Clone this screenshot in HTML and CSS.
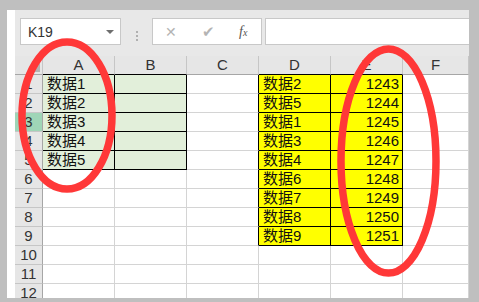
FILE: index.html
```html
<!DOCTYPE html>
<html lang="zh-CN">
<head>
    <meta charset="UTF-8">
    <title>K19</title>
    <link rel="stylesheet" href="styles.css">
</head>
<body>
    <div class="window">
        <div class="toolbar">
            <div class="name-box">
                <span>K19</span>
                <span class="drop"></span>
            </div>
            <div class="grip"><i></i><i></i><i></i></div>
            <div class="fx-box">
                <span class="btn">&#x2715;</span>
                <span class="btn check">&#x2714;</span>
                <span class="fx">f<sub>x</sub></span>
            </div>
            <div class="formula"></div>
        </div>

        <table class="sheet">
            <colgroup>
                <col class="c-head">
                <col class="c-col"><col class="c-col"><col class="c-col">
                <col class="c-col"><col class="c-col"><col class="c-last">
            </colgroup>
            <tr class="head">
                <td class="corner"><span class="tri"></span></td>
                <td class="bb">A</td><td class="bb">B</td><td>C</td>
                <td class="bb">D</td><td class="bb">E</td><td>F</td>
            </tr>
            <tr><td class="rh">1</td><td class="g">数据1</td><td class="g"></td><td class="br"></td><td class="y">数据2</td><td class="y num">1243</td><td></td></tr>
            <tr><td class="rh">2</td><td class="g">数据2</td><td class="g"></td><td class="br"></td><td class="y">数据5</td><td class="y num">1244</td><td></td></tr>
            <tr><td class="rh sel">3</td><td class="g">数据3</td><td class="g"></td><td class="br"></td><td class="y">数据1</td><td class="y num">1245</td><td></td></tr>
            <tr><td class="rh">4</td><td class="g">数据4</td><td class="g"></td><td class="br"></td><td class="y">数据3</td><td class="y num">1246</td><td></td></tr>
            <tr><td class="rh">5</td><td class="g">数据5</td><td class="g"></td><td class="br"></td><td class="y">数据4</td><td class="y num">1247</td><td></td></tr>
            <tr><td class="rh">6</td><td></td><td></td><td class="br"></td><td class="y">数据6</td><td class="y num">1248</td><td></td></tr>
            <tr><td class="rh">7</td><td></td><td></td><td class="br"></td><td class="y">数据7</td><td class="y num">1249</td><td></td></tr>
            <tr><td class="rh">8</td><td></td><td></td><td class="br"></td><td class="y">数据8</td><td class="y num">1250</td><td></td></tr>
            <tr><td class="rh">9</td><td></td><td></td><td class="br"></td><td class="y">数据9</td><td class="y num">1251</td><td></td></tr>
            <tr><td class="rh">10</td><td></td><td></td><td></td><td></td><td></td><td></td></tr>
            <tr><td class="rh">11</td><td></td><td></td><td></td><td></td><td></td><td></td></tr>
            <tr><td class="rh">12</td><td></td><td></td><td></td><td></td><td></td><td></td></tr>
        </table>
    </div>

    <svg class="marks" width="479" height="302" viewBox="0 0 479 302">
        <ellipse cx="67" cy="115.5" rx="45" ry="73.5" />
        <ellipse cx="388.5" cy="161" rx="47.5" ry="112" />
    </svg>
</body>
</html>
```

FILE: styles.css
```css
* {
    margin: 0;
    padding: 0;
    box-sizing: border-box;
}

body {
    width: 479px;
    height: 302px;
    overflow: hidden;
    background-color: #bfbfbf;
    font-family: 'Liberation Sans', 'Noto Sans CJK SC', sans-serif;
    color: #111;
    position: relative;
}

.window {
    margin: 10px 0 0 7px;
    width: 462px;
    height: 288px;
    padding-left: 8px;
    background-color: #ffffff;
    overflow: hidden;
}

/* formula bar */
.toolbar {
    display: flex;
    height: 46px;
    padding: 8px 0 0 5px;
    background-color: #e8e8e8;
}

.name-box {
    width: 101px;
    height: 27px;
    border: 1px solid #c8c8c8;
    background-color: #ffffff;
    display: flex;
    align-items: center;
    justify-content: space-between;
    padding: 0 6px 0 7px;
    font-size: 14px;
    color: #333;
}

.drop {
    width: 0;
    height: 0;
    border-left: 4px solid transparent;
    border-right: 4px solid transparent;
    border-top: 4px solid #6e6e6e;
}

.grip {
    width: 31px;
    display: flex;
    flex-direction: column;
    align-items: center;
    justify-content: center;
    gap: 2px;
    padding-bottom: 2px;
}

.grip i {
    display: block;
    width: 2px;
    height: 2px;
    background-color: #b0b0b0;
}

.fx-box {
    width: 110px;
    height: 27px;
    border: 1px solid #c8c8c8;
    background-color: #ffffff;
    display: flex;
    align-items: center;
    padding-left: 12px;
}

.btn {
    width: 37px;
    font-size: 14px;
    color: #b4b4b4;
}

.check {
    font-size: 15px;
}

.fx {
    font-family: 'Liberation Serif', serif;
    font-style: italic;
    font-size: 14px;
    color: #555;
}

.fx sub {
    font-size: 10px;
    vertical-align: 0;
}

.formula {
    flex: 1;
    height: 27px;
    margin-left: 3px;
    border: 1px solid #c8c8c8;
    border-right: none;
    background-color: #ffffff;
}

/* grid */
.sheet {
    table-layout: fixed;
    width: 454px;
    border-collapse: separate;
    border-spacing: 0;
    font-size: 15px;
}

.c-head { width: 28px; }
.c-col { width: 72px; }
.c-last { width: 66px; }

.sheet tr {
    height: 19px;
}

.sheet td {
    height: 19px;
    border-right: 1px solid #d4d4d4;
    border-bottom: 1px solid #d4d4d4;
    padding: 0 3px 0 4px;
    line-height: 18px;
    white-space: nowrap;
    overflow: hidden;
}

.sheet .head td {
    height: 18px;
    background-color: #e6e6e6;
    border-right-color: #c6c6c6;
    border-bottom-color: #a6a6a6;
    text-align: center;
    color: #333;
    padding: 0;
}

.sheet .head td.bb {
    border-bottom-color: #000;
}

.sheet .corner {
    position: relative;
    border-right-color: #a6a6a6;
}

.tri {
    position: absolute;
    right: 2px;
    bottom: 2px;
    width: 0;
    height: 0;
    border-left: 9px solid transparent;
    border-bottom: 9px solid #b4b4b4;
}

.sheet td.rh {
    background-color: #e6e6e6;
    border-right-color: #a6a6a6;
    border-bottom-color: #c6c6c6;
    text-align: center;
    color: #333;
    padding: 0;
}

.sheet td.sel {
    background-color: #9fd5b7;
}

.sheet td.g {
    background-color: #e2efda;
    border-color: #000;
}

.sheet td.y {
    background-color: #ffff00;
    border-color: #000;
}

.sheet td.br {
    border-right-color: #000;
}

.sheet td.num {
    text-align: right;
}

/* annotation */
.marks {
    position: absolute;
    left: 0;
    top: 0;
    pointer-events: none;
}

.marks ellipse {
    fill: none;
    stroke: #ff3838;
    stroke-width: 7.5;
}
```
